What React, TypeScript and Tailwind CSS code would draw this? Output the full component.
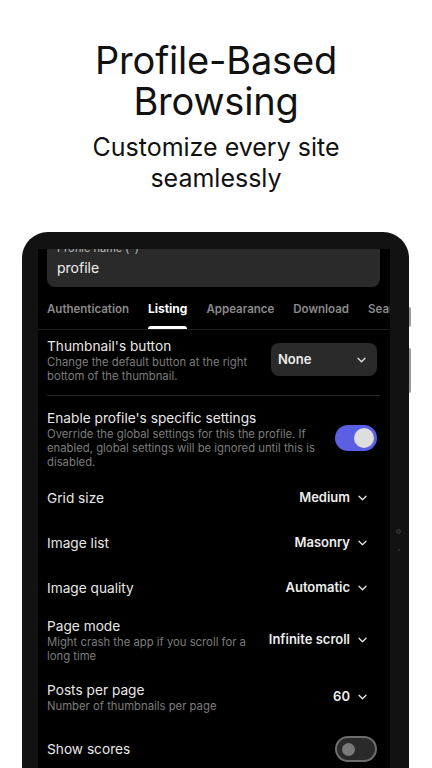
import React from "react";

const Chevron = () => (
  <svg width="9" height="6" viewBox="0 0 9 6" fill="none" className="shrink-0">
    <path d="M1 1.2 L4.5 4.7 L8 1.2" stroke="#e5e5e5" strokeWidth="1.3" strokeLinecap="round" strokeLinejoin="round" />
  </svg>
);

const Value = ({ text }: { text: string }) => (
  <div className="flex items-center gap-[8px] pr-[10px]">
    <span className="text-[13px] font-semibold text-[#ededed]">{text}</span>
    <Chevron />
  </div>
);

const Toggle = ({ on }: { on: boolean }) =>
  on ? (
    <div className="flex h-[26px] w-[42px] shrink-0 items-center justify-end rounded-full bg-[#5a5fe3] pr-[3px]">
      <div className="h-[20px] w-[20px] rounded-full bg-[#dedede]" />
    </div>
  ) : (
    <div className="flex h-[26px] w-[42px] shrink-0 items-center rounded-full border-2 border-[#6e6e6e] bg-[#2a2a2a] pl-[5px]">
      <div className="h-[13px] w-[13px] rounded-full bg-[#7a7a7a]" />
    </div>
  );

const Title = ({ children }: { children: React.ReactNode }) => (
  <div className="text-[13.7px] leading-[18px] text-[#e8e8e8]">{children}</div>
);

const Desc = ({ children }: { children: React.ReactNode }) => (
  <div className="text-[11.3px] leading-[14px] text-[#7c7c7c]">{children}</div>
);

const Simple = ({ label, value }: { label: string; value: string }) => (
  <div className="flex h-[45px] items-center justify-between pr-[3px]">
    <Title>{label}</Title>
    <Value text={value} />
  </div>
);

export default function App() {
  const tabs = ["Authentication", "Listing", "Appearance", "Download", "Search"];
  return (
    <div
      className="h-[768px] w-[432px] overflow-hidden bg-white"
      style={{ fontFamily: "Inter, 'Noto Sans', sans-serif" }}
    >
      <div className="flex flex-col items-center pt-[40px] text-center text-[#111]">
        <h1 className="text-[38px] font-normal leading-[41px] tracking-[-0.2px]">
          Profile-Based
          <br />
          Browsing
        </h1>
        <p className="mt-[10px] text-[25px] leading-[31px]">
          Customize every site
          <br />
          seamlessly
        </p>
      </div>

      <div className="relative ml-[22px] mt-[38px] w-[387px] rounded-t-[26px] bg-[#121212] pl-[16px] pr-[19px] pt-[17px]">
        {/* side buttons */}
        <div className="absolute right-[-2px] top-[75px] h-[20px] w-[2px] rounded-r bg-[#9a9a9a]" />
        <div className="absolute right-[-2px] top-[116px] h-[45px] w-[2px] rounded-r bg-[#9a9a9a]" />
        {/* camera */}
        <div className="absolute right-[8px] top-[297px] h-[5px] w-[5px] rounded-full border border-[#3a3a3a] bg-[#1c2430]" />
        <div className="absolute right-[9px] top-[317px] h-[2px] w-[2px] rounded-full bg-[#2e2e2e]" />

        <div className="h-[600px] overflow-hidden bg-black pl-[9px] pr-[10px]">
          {/* profile field */}
          <div className="-mt-[16px] rounded-[8px] bg-[#2a2a2a] px-[10px] pb-[9px] pt-[8px]">
            <div className="text-[11px] leading-[14px] text-[#bdbdbd]">Profile name (*)</div>
            <div className="mt-[3px] text-[14px] leading-[20px] text-[#f0f0f0]">profile</div>
          </div>

          {/* tabs */}
          <div className="-ml-[9px] -mr-[10px] flex gap-[19px] overflow-hidden whitespace-nowrap border-b border-[#1e1e1e] pl-[9px] pt-[14px]">
            {tabs.map((t) => (
              <div key={t} className="flex shrink-0 flex-col">
                <span
                  className={
                    "leading-[16px] " +
                    (t === "Listing"
                      ? "text-[12px] font-bold text-white"
                      : "text-[11.5px] font-semibold text-[#8a8a8a]")
                  }
                >
                  {t}
                </span>
                <div
                  className={
                    "mt-[9px] h-[3px] rounded-t-full " + (t === "Listing" ? "bg-white" : "bg-transparent")
                  }
                />
              </div>
            ))}
          </div>

          {/* thumbnail's button */}
          <div className="mt-[7px] flex items-start justify-between pr-[3px]">
            <div className="w-[215px]">
              <Title>Thumbnail's button</Title>
              <Desc>Change the default button at the right bottom of the thumbnail.</Desc>
            </div>
            <div className="mt-[6px] flex h-[33px] w-[106px] items-center justify-between rounded-[8px] bg-[#2a2a2a] pl-[7px] pr-[11px]">
              <span className="text-[13px] font-semibold text-[#ededed]">None</span>
              <Chevron />
            </div>
          </div>

          <div className="mt-[12px] h-px bg-[#2a2a2a]" />

          {/* enable profile */}
          <div className="mt-[13px] flex items-start justify-between pr-[3px]">
            <div className="w-[275px]">
              <Title>Enable profile's specific settings</Title>
              <Desc>
                Override the global settings for this the profile. If enabled, global settings will be ignored until
                this is disabled.
              </Desc>
            </div>
            <div className="mt-[16px]">
              <Toggle on={true} />
            </div>
          </div>

          <div className="mt-[6px]">
            <Simple label="Grid size" value="Medium" />
            <Simple label="Image list" value="Masonry" />
            <Simple label="Image quality" value="Automatic" />
          </div>

          {/* page mode */}
          <div className="mt-[7px] flex items-center justify-between pr-[3px]">
            <div className="w-[205px]">
              <Title>Page mode</Title>
              <Desc>Might crash the app if you scroll for a long time</Desc>
            </div>
            <Value text="Infinite scroll" />
          </div>

          {/* posts per page */}
          <div className="mt-[18px] flex items-center justify-between pr-[3px]">
            <div>
              <Title>Posts per page</Title>
              <Desc>Number of thumbnails per page</Desc>
            </div>
            <Value text="60" />
          </div>

          {/* show scores */}
          <div className="mt-[23px] flex items-center justify-between pr-[3px]">
            <Title>Show scores</Title>
            <Toggle on={false} />
          </div>
        </div>
      </div>
    </div>
  );
}
